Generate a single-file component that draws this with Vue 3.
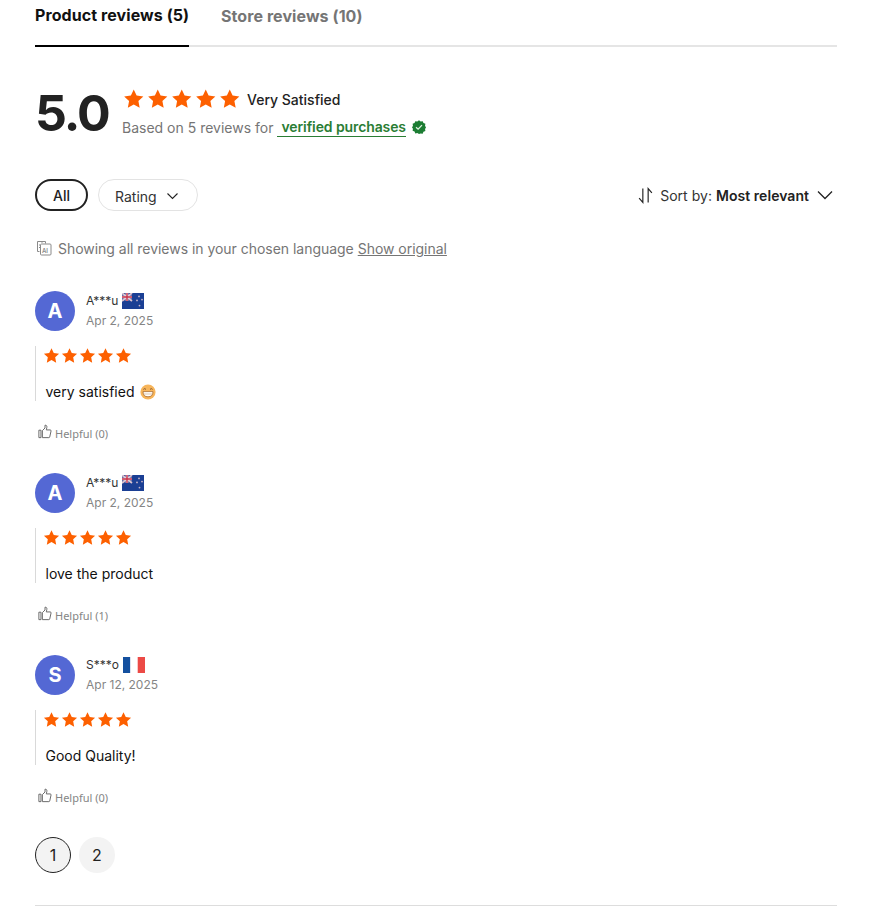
<script setup>
const reviews = [
  { initial: 'A', name: 'A***u', flag: 'nz', date: 'Apr 2, 2025', text: 'very satisfied', emoji: true, helpful: 0 },
  { initial: 'A', name: 'A***u', flag: 'nz', date: 'Apr 2, 2025', text: 'love the product', emoji: false, helpful: 1 },
  { initial: 'S', name: 'S***o', flag: 'fr', date: 'Apr 12, 2025', text: 'Good Quality!', emoji: false, helpful: 0 }
]
const starPath = 'M12 1.6l3.2 6.9 7.5.9-5.5 5.2 1.4 7.5L12 18.4l-6.6 3.7 1.4-7.5L1.3 9.4l7.5-.9z'
</script>

<template>
  <div class="page">
    <div class="tabs">
      <div class="tab active">Product reviews (5)</div>
      <div class="tab">Store reviews (10)</div>
    </div>

    <div class="summary">
      <div class="score">5.0</div>
      <div class="summary-info">
        <div class="summary-top">
          <svg v-for="n in 5" :key="n" class="big-star" viewBox="0 0 24 24"><path :d="starPath" /></svg>
          <span class="satisfied">Very Satisfied</span>
        </div>
        <div class="summary-bottom">
          <span>Based on 5 reviews for</span>
          <span class="verified">verified purchases</span>
          <svg class="badge" viewBox="0 0 16 16">
            <path d="M8 .4l1.9 1.3 2.3-.4.9 2.2 2.2.9-.4 2.3L16 8.6l-1.1 1.7.4 2.3-2.2.9-.9 2.2-2.3-.4L8 16l-1.9-1.1-2.3.4-.9-2.2-2.2-.9.4-2.3L0 8.6l1.1-1.9-.4-2.3 2.2-.9.9-2.2 2.3.4z" fill="#1c7d33" />
            <path d="M4.6 8.2l2.4 2.3 4.4-4.6" fill="none" stroke="#dff2e2" stroke-width="1.5" />
          </svg>
        </div>
      </div>
    </div>

    <div class="filters">
      <div class="pills">
        <div class="pill pill-active">All</div>
        <div class="pill pill-rating">
          Rating
          <svg class="pill-chevron" viewBox="0 0 12 8"><path d="M1 1.5l5 5 5-5" fill="none" stroke="#222" stroke-width="1.1" /></svg>
        </div>
      </div>
      <div class="sort">
        <svg class="sort-icon" viewBox="0 0 16 16">
          <path d="M5.5 1.5v13L2 10.5M10.5 14.5v-13l3.5 4" fill="none" stroke="#222" stroke-width="1.1" />
        </svg>
        <span>Sort by: <b>Most relevant</b></span>
        <svg class="sort-chevron" viewBox="0 0 16 10"><path d="M1 1.5l7 7 7-7" fill="none" stroke="#222" stroke-width="1.3" /></svg>
      </div>
    </div>

    <div class="translated">
      <svg class="ai-icon" viewBox="0 0 16 16" fill="none" stroke="#8a8a8a" stroke-width="1">
        <path d="M3.5 11.5h-2v-10h8v2" />
        <rect x="4.5" y="4" width="10.5" height="11" rx="1" />
        <path d="M6 2.8V1M3 5h1M3 7.5h1" />
        <text x="6" y="12.5" class="ai-text">AI</text>
      </svg>
      <span>Showing all reviews in your chosen language</span>
      <span class="show-original">Show original</span>
    </div>

    <div class="review" v-for="(r, i) in reviews" :key="i">
      <div class="review-head">
        <div class="avatar">{{ r.initial }}</div>
        <div class="who">
          <div class="name-row">
            <span class="name">{{ r.name }}</span>
            <svg v-if="r.flag === 'nz'" class="flag" viewBox="0 0 22 16">
              <rect width="22" height="16" fill="#1b3f94" />
              <rect width="10" height="8" fill="#3a4a94" />
              <path d="M0 0l10 8M10 0L0 8" stroke="#d9c3cf" stroke-width="1.8" />
              <path d="M5 0v8M0 4h10" stroke="#e8dfe6" stroke-width="2.6" />
              <path d="M5 0v8M0 4h10" stroke="#c8324a" stroke-width="1.4" />
              <circle cx="17" cy="3.4" r=".9" fill="#c9b6c8" />
              <circle cx="20" cy="6.6" r=".9" fill="#c9b6c8" />
              <circle cx="15" cy="7.4" r=".9" fill="#c9b6c8" />
              <circle cx="17.5" cy="12.6" r=".9" fill="#c9b6c8" />
            </svg>
            <svg v-else class="flag" viewBox="0 0 22 16">
              <rect width="7.4" height="16" fill="#14509f" />
              <rect x="7.4" width="7.3" height="16" fill="#fff" />
              <rect x="14.7" width="7.3" height="16" fill="#ec4a46" />
            </svg>
          </div>
          <div class="date">{{ r.date }}</div>
        </div>
      </div>
      <div class="review-body">
        <div class="stars">
          <svg v-for="n in 5" :key="n" class="small-star" viewBox="0 0 24 24"><path :d="starPath" /></svg>
        </div>
        <div class="review-text">
          {{ r.text }}
          <svg v-if="r.emoji" class="emoji" viewBox="0 0 16 16">
            <circle cx="8" cy="8" r="7.6" fill="#f7b55b" />
            <path d="M3.4 5.4q1.3-1.5 2.6 0M10 5.4q1.3-1.5 2.6 0" fill="none" stroke="#8a5a2c" stroke-width="1" />
            <path d="M3 7.6h10q0 5.2-5 5.2t-5-5.2z" fill="#fff" stroke="#a8692e" stroke-width=".8" />
            <path d="M3.4 10h9.2" stroke="#c9a06e" stroke-width=".6" />
          </svg>
        </div>
      </div>
      <div class="helpful">
        <svg class="thumb" viewBox="0 0 16 16" fill="none" stroke="#666" stroke-width="1.1">
          <path d="M1 6.5v8.5h2.4V6.5zM5 15V7l3-3V.8c1.8-.3 2.4 1.1 2.1 2.6l-.6 2.8h4.4c.8 0 1.2.6 1 1.3l-1.5 6.7c-.1.5-.5.8-1 .8z" />
        </svg>
        <span>Helpful ({{ r.helpful }})</span>
      </div>
    </div>

    <div class="pagination">
      <div class="page-btn current">1</div>
      <div class="page-btn">2</div>
    </div>
    <div class="bottom-line"></div>
  </div>
</template>

<style>
body {
  background: #fff;
}
</style>

<style scoped>
.page {
  width: 802px;
  margin-left: 35px;
  font-family: Inter, "Liberation Sans", sans-serif;
  color: #191919;
}

.tabs {
  display: flex;
  gap: 32px;
  height: 47px;
  border-bottom: 2px solid #e5e5e5;
  box-sizing: border-box;
}

.tab {
  font-size: 16px;
  font-weight: 700;
  letter-spacing: 0.08px;
  white-space: nowrap;
  color: #757575;
  padding-top: 6px;
  line-height: 20px;
}

.tab.active {
  color: #111;
  width: 154px;
  padding-top: 5px;
  height: 47px;
  box-sizing: border-box;
  border-bottom: 2px solid #000;
}

.summary {
  display: flex;
  margin-top: 40px;
}

.score {
  width: 87px;
  font-size: 50px;
  font-weight: 700;
  line-height: 52px;
  color: #222;
  letter-spacing: -2px;
}

.summary-top {
  display: flex;
  align-items: center;
  height: 24px;
  padding-left: 1px;
}

.big-star {
  width: 21.5px;
  height: 21.5px;
  margin-right: 2.5px;
  fill: #fd6000;
}

.satisfied {
  font-size: 14px;
  font-weight: 500;
  color: #222;
  margin-left: 4px;
}

.summary-bottom {
  display: flex;
  align-items: center;
  font-size: 14px;
  color: #757575;
  margin-top: 6px;
  height: 20px;
}

.verified {
  color: #2a7d34;
  font-weight: 600;
  letter-spacing: -0.1px;
  margin-left: 4px;
  padding: 0 0 1px 4px;
  border-bottom: 1px solid #2a7d34;
}

.badge {
  width: 14px;
  height: 14px;
  margin-left: 6px;
}

.filters {
  display: flex;
  justify-content: space-between;
  align-items: center;
  margin-top: 39px;
  height: 33px;
}

.pills {
  display: flex;
  gap: 10px;
  align-items: center;
}

.pill {
  display: flex;
  align-items: center;
  gap: 9px;
  height: 32px;
  padding: 2px 16px 0;
  border: 1px solid #e3e3e3;
  border-radius: 16px;
  box-sizing: border-box;
  font-size: 14px;
  color: #333;
}

.pill-rating {
  width: 100px;
  margin-top: 1px;
}

.pill-active {
  width: 53px;
  padding: 2px 0 0;
  justify-content: center;
  border: 2px solid #222;
  font-weight: 500;
  color: #222;
}

.pill-chevron {
  width: 13px;
  height: 8px;
}

.sort {
  display: flex;
  align-items: center;
  font-size: 14px;
  letter-spacing: 0.04px;
  color: #333;
  padding-right: 4px;
  margin-top: 1px;
}

.sort b {
  font-weight: 600;
  color: #222;
}

.sort-icon {
  width: 17px;
  height: 17px;
  margin-right: 6px;
}

.sort-chevron {
  width: 16px;
  height: 10px;
  margin-left: 8px;
}

.translated {
  display: flex;
  align-items: center;
  margin-top: 27px;
  height: 20px;
  font-size: 14px;
  letter-spacing: -0.03px;
  color: #757575;
}

.ai-icon {
  width: 16px;
  height: 16px;
  margin: 0 6px 0 1px;
}

.ai-text {
  font-family: Inter, sans-serif;
  font-size: 6px;
  font-weight: 600;
  fill: #8a8a8a;
  stroke: none;
}

.show-original {
  margin-left: 4px;
  text-decoration: underline;
}

.review {
  height: 182px;
}

.translated + .review {
  margin-top: 33px;
}

.review-head {
  display: flex;
  gap: 11px;
  align-items: center;
  height: 40px;
}

.avatar {
  width: 40px;
  height: 40px;
  border-radius: 50%;
  background: #5468d4;
  color: #fff;
  font-size: 20px;
  font-weight: 700;
  display: flex;
  align-items: center;
  justify-content: center;
}

.who {
  margin-top: -2px;
}

.name-row {
  display: flex;
  align-items: center;
  gap: 4px;
  height: 18px;
  font-size: 12px;
  color: #333;
}

.flag {
  width: 22px;
  height: 16px;
}

.date {
  font-size: 12px;
  color: #858585;
  margin-top: 3px;
  line-height: 16px;
}

.review-body {
  margin-top: 15px;
  height: 55px;
  border-left: 1px solid #d9d9d9;
  padding-left: 10px;
}

.stars {
  display: flex;
  align-items: center;
  gap: 1px;
  height: 18px;
  margin-left: -3px;
}

.small-star {
  width: 17px;
  height: 17px;
  fill: #fd6000;
}

.review-text {
  display: flex;
  align-items: center;
  gap: 6px;
  margin-top: 18px;
  margin-left: -0.5px;
  font-size: 14px;
  line-height: 20px;
  color: #111;
}

.emoji {
  width: 16px;
  height: 16px;
}

.helpful {
  display: flex;
  align-items: center;
  gap: 3px;
  margin-top: 25px;
  font-family: "Noto Sans", sans-serif;
  font-size: 11px;
  color: #858585;
}

.thumb {
  width: 14px;
  height: 15px;
  margin: -4px 0 0 3px;
}

.pagination {
  display: flex;
  gap: 8px;
}

.page-btn {
  width: 36px;
  height: 36px;
  box-sizing: border-box;
  border-radius: 50%;
  background: #f3f3f3;
  display: flex;
  align-items: center;
  justify-content: center;
  font-size: 16px;
  color: #222;
}

.page-btn.current {
  border: 1px solid #222;
}

.bottom-line {
  margin-top: 32px;
  height: 1px;
  background: #ddd;
}
</style>
